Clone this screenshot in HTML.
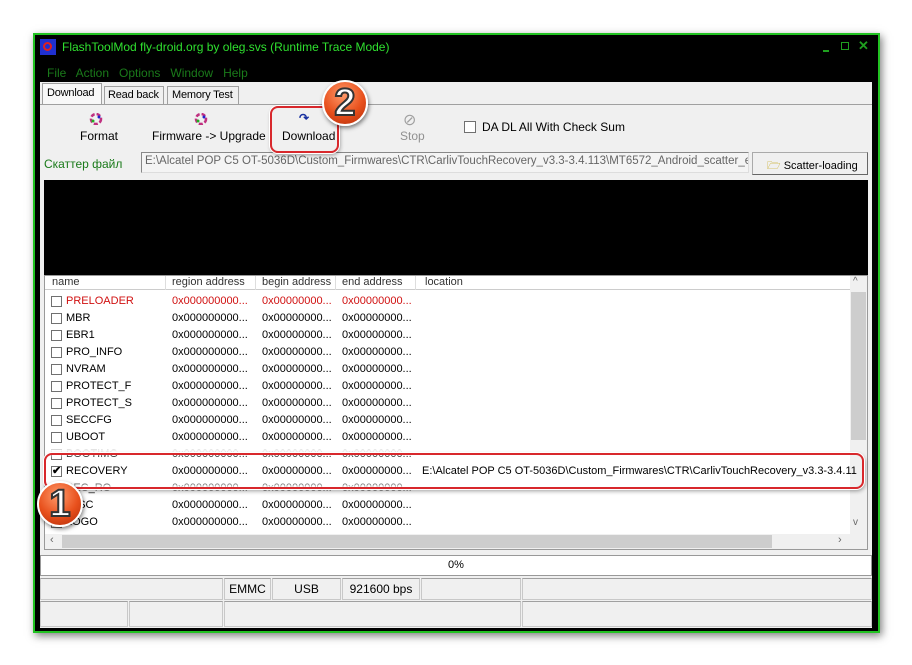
<!DOCTYPE html>
<html><head><meta charset="utf-8">
<style>
*{margin:0;padding:0;box-sizing:border-box}
body{width:912px;height:665px;background:#fff;font-family:"Liberation Sans",sans-serif;font-size:11px;color:#000;position:relative;overflow:hidden}
.a{position:absolute;white-space:nowrap}
.win{left:33px;top:33px;width:847px;height:600px;background:#000;border:2px solid #22c322;box-shadow:2px 3px 8px rgba(0,0,0,.5)}
.client{left:40px;top:82px;width:832px;height:546px;background:#f0f0f0}
.chk{width:11px;height:11px;border:1px solid #707070;background:#fff}
.row{height:17px;line-height:17px}
.circ{width:46px;height:46px;border-radius:50%;background:radial-gradient(circle at 45% 30%,#ff9a6a,#e8501c 55%,#b02a08);border:2px solid #fff;box-shadow:1px 2px 4px rgba(0,0,0,.5);color:#fff;font:bold 38px/42px "Liberation Sans",sans-serif;text-align:center;-webkit-text-stroke:2px #333}
.red{border:2px solid #d8282c;border-radius:8px;box-shadow:0 0 0 1px #fff,1px 2px 4px rgba(0,0,0,.4)}
.cell{border:1px solid #c8c8c8;border-top-color:#a0a0a0;height:22px;background:#f0f0f0}
.tab{font-size:11px;letter-spacing:-0.2px}
</style></head><body>
<div class="a win"></div>
<div class="a" style="left:40px;top:39px;width:16px;height:16px;background:#2030d0"><div class="a" style="left:3px;top:3px;width:9px;height:9px;border:2px solid #e02020;border-radius:50%"></div></div>
<div class="a" style="left:62px;top:40px;color:#2fe02f;font-size:12px">FlashToolMod fly-droid.org by oleg.svs (Runtime Trace Mode)</div>
<div class="a" style="left:823px;top:50px;width:6px;height:2px;background:#1fa01f"></div>
<div class="a" style="left:841px;top:42px;width:8px;height:8px;border:1.5px solid #1fa01f"></div>
<div class="a" style="left:858px;top:38px;color:#1fa01f;font-size:13px;font-weight:bold">✕</div>
<div class="a" style="left:47px;top:66px;color:#1a7a1a;font-size:12px">File&nbsp;&nbsp; Action&nbsp;&nbsp; Options&nbsp;&nbsp; Window&nbsp;&nbsp; Help</div>
<div class="a client"></div>
<!-- tabs -->
<div class="a tab" style="left:42px;top:83px;width:60px;height:22px;background:#f8f8f8;border:1px solid #a0a0a0;border-bottom:none;padding:3px 0 0 4px">Download</div>
<div class="a tab" style="left:104px;top:86px;width:60px;height:18px;border:1px solid #a0a0a0;border-bottom:none;padding:2px 0 0 3px">Read back</div>
<div class="a tab" style="left:167px;top:86px;width:72px;height:18px;border:1px solid #a0a0a0;border-bottom:none;padding:2px 0 0 4px">Memory Test</div>
<div class="a" style="left:40px;top:104px;width:832px;height:1px;background:#a0a0a0"></div>
<!-- toolbar -->
<svg class="a" style="left:89px;top:113px" width="14" height="12"><circle cx="7" cy="6" r="5" fill="none" stroke="#c03080" stroke-width="2.5" stroke-dasharray="4 2"/><circle cx="4" cy="8" r="1.5" fill="#2a2"/><circle cx="10" cy="4" r="1.5" fill="#22c"/></svg>
<div class="a" style="left:80px;top:129px;font-size:12px">Format</div>
<svg class="a" style="left:194px;top:113px" width="14" height="12"><circle cx="7" cy="6" r="5" fill="none" stroke="#c03080" stroke-width="2.5" stroke-dasharray="4 2"/><circle cx="4" cy="8" r="1.5" fill="#2a2"/><circle cx="10" cy="4" r="1.5" fill="#22c"/></svg>
<div class="a" style="left:152px;top:129px;font-size:12px">Firmware -&gt; Upgrade</div>
<div class="a" style="left:299px;top:111px;color:#1830a0;font-size:12px;font-weight:bold">↷</div>
<div class="a" style="left:282px;top:129px;font-size:12px">Download</div>
<div class="a" style="left:403px;top:110px;color:#a0a0a0;font-size:16px">⊘</div>
<div class="a" style="left:400px;top:129px;font-size:12px;color:#909090">Stop</div>
<div class="a chk" style="left:464px;top:121px;width:12px;height:12px"></div>
<div class="a" style="left:482px;top:120px;font-size:12px">DA DL All With Check Sum</div>
<!-- scatter -->
<div class="a" style="left:44px;top:157px;color:#1a7a1a;font-size:12px">Скаттер файл</div>
<div class="a" style="left:141px;top:152px;width:608px;height:21px;border:1px solid #888;border-right-color:#ddd;border-bottom-color:#ddd;background:#f4f4f4;color:#666;font-size:11.5px;padding:2px 3px;overflow:hidden">E:\Alcatel POP C5 OT-5036D\Custom_Firmwares\CTR\CarlivTouchRecovery_v3.3-3.4.113\MT6572_Android_scatter_emmc.t</div>
<div class="a" style="left:752px;top:152px;width:116px;height:23px;border:1px solid #aaa;border-bottom-color:#666;border-right-color:#666;background:#f0f0f0;font-size:11px;padding:4px 0 0 14px"><span style="color:#c0a000">🗁</span> Scatter-loading</div>
<!-- log -->
<div class="a" style="left:44px;top:180px;width:824px;height:95px;background:#000"></div>
<!-- table -->
<div class="a" style="left:44px;top:275px;width:824px;height:275px;background:#fff;border:1px solid #999"></div>
<div class="a" style="left:45px;top:276px;width:805px;height:14px;background:#fff;border-bottom:1px solid #ccc;color:#333">
<span class="a" style="left:7px;top:0">name</span>
<span class="a" style="left:120px;top:0;height:14px;border-left:1px solid #ddd"></span>
<span class="a" style="left:127px;top:0">region address</span>
<span class="a" style="left:210px;top:0;height:14px;border-left:1px solid #ddd"></span>
<span class="a" style="left:217px;top:0">begin address</span>
<span class="a" style="left:290px;top:0;height:14px;border-left:1px solid #ddd"></span>
<span class="a" style="left:297px;top:0">end address</span>
<span class="a" style="left:370px;top:0;height:14px;border-left:1px solid #ddd"></span>
<span class="a" style="left:380px;top:0">location</span>
</div>
<div class="a" style="left:850px;top:276px;width:17px;height:258px;background:#f0f0f0"></div>
<div class="a" style="left:851px;top:292px;width:15px;height:148px;background:#cdcdcd"></div>
<div class="a" style="left:853px;top:276px;color:#666;font-size:10px">^</div>
<div class="a" style="left:853px;top:517px;color:#666;font-size:10px">v</div>
<div id="rows"></div>
<script>
var n=["PRELOADER","MBR","EBR1","PRO_INFO","NVRAM","PROTECT_F","PROTECT_S","SECCFG","UBOOT","BOOTIMG","RECOVERY","SEC_RO","MISC","LOGO"];
var h="";
for(var i=0;i<n.length;i++){var t=293+i*17;var c=i==0?"#d01010":"#000";
h+='<div class="a chk" style="left:51px;top:'+(t+3)+'px"></div>';
if(i==10)h+='<div class="a" style="left:52px;top:'+(t+1)+'px;font-size:11px;font-weight:bold">✔</div>';
h+='<div class="a row" style="left:66px;top:'+t+'px;color:'+c+'">'+n[i]+'</div>';
h+='<div class="a row" style="left:172px;top:'+t+'px;color:'+c+'">0x000000000...</div>';
h+='<div class="a row" style="left:262px;top:'+t+'px;color:'+c+'">0x00000000...</div>';
h+='<div class="a row" style="left:342px;top:'+t+'px;color:'+c+'">0x00000000...</div>';}
h+='<div class="a row" style="left:422px;top:463px">E:\\Alcatel POP C5 OT-5036D\\Custom_Firmwares\\CTR\\CarlivTouchRecovery_v3.3-3.4.11</div>';
document.getElementById("rows").innerHTML=h;
</script>
<div class="a" style="left:45px;top:446px;width:805px;height:12px;background:linear-gradient(#fff0,#fff 40%,#fff0)"></div>
<div class="a" style="left:45px;top:481px;width:805px;height:12px;background:linear-gradient(#fff0,#fff 60%,#fff0)"></div>
<div class="a" style="left:45px;top:534px;width:822px;height:15px;background:#f0f0f0"></div>
<div class="a" style="left:62px;top:535px;width:710px;height:13px;background:#cdcdcd"></div>
<div class="a" style="left:50px;top:534px;color:#666">‹</div>
<div class="a" style="left:838px;top:534px;color:#666">›</div>
<!-- progress -->
<div class="a" style="left:40px;top:555px;width:832px;height:21px;background:#fff;border:1px solid #999;text-align:center;line-height:19px">0%</div>
<!-- status -->
<div class="a cell" style="left:40px;top:578px;width:183px"></div>
<div class="a cell" style="left:224px;top:578px;width:47px;text-align:center;line-height:20px;font-size:12px">EMMC</div>
<div class="a cell" style="left:272px;top:578px;width:69px;text-align:center;line-height:20px;font-size:12px">USB</div>
<div class="a cell" style="left:342px;top:578px;width:78px;text-align:center;line-height:20px;font-size:12px">921600 bps</div>
<div class="a cell" style="left:421px;top:578px;width:100px"></div>
<div class="a cell" style="left:522px;top:578px;width:350px"></div>
<div class="a cell" style="left:40px;top:601px;width:88px;height:26px"></div>
<div class="a cell" style="left:129px;top:601px;width:94px;height:26px"></div>
<div class="a cell" style="left:224px;top:601px;width:297px;height:26px"></div>
<div class="a cell" style="left:522px;top:601px;width:350px;height:26px"></div>
<!-- annotations -->
<div class="a red" style="left:270px;top:106px;width:69px;height:47px"></div>
<div class="a red" style="left:44px;top:453px;width:820px;height:36px"></div>
<div class="a circ" style="left:322px;top:80px">2</div>
<div class="a circ" style="left:37px;top:481px">1</div>
</body></html>
